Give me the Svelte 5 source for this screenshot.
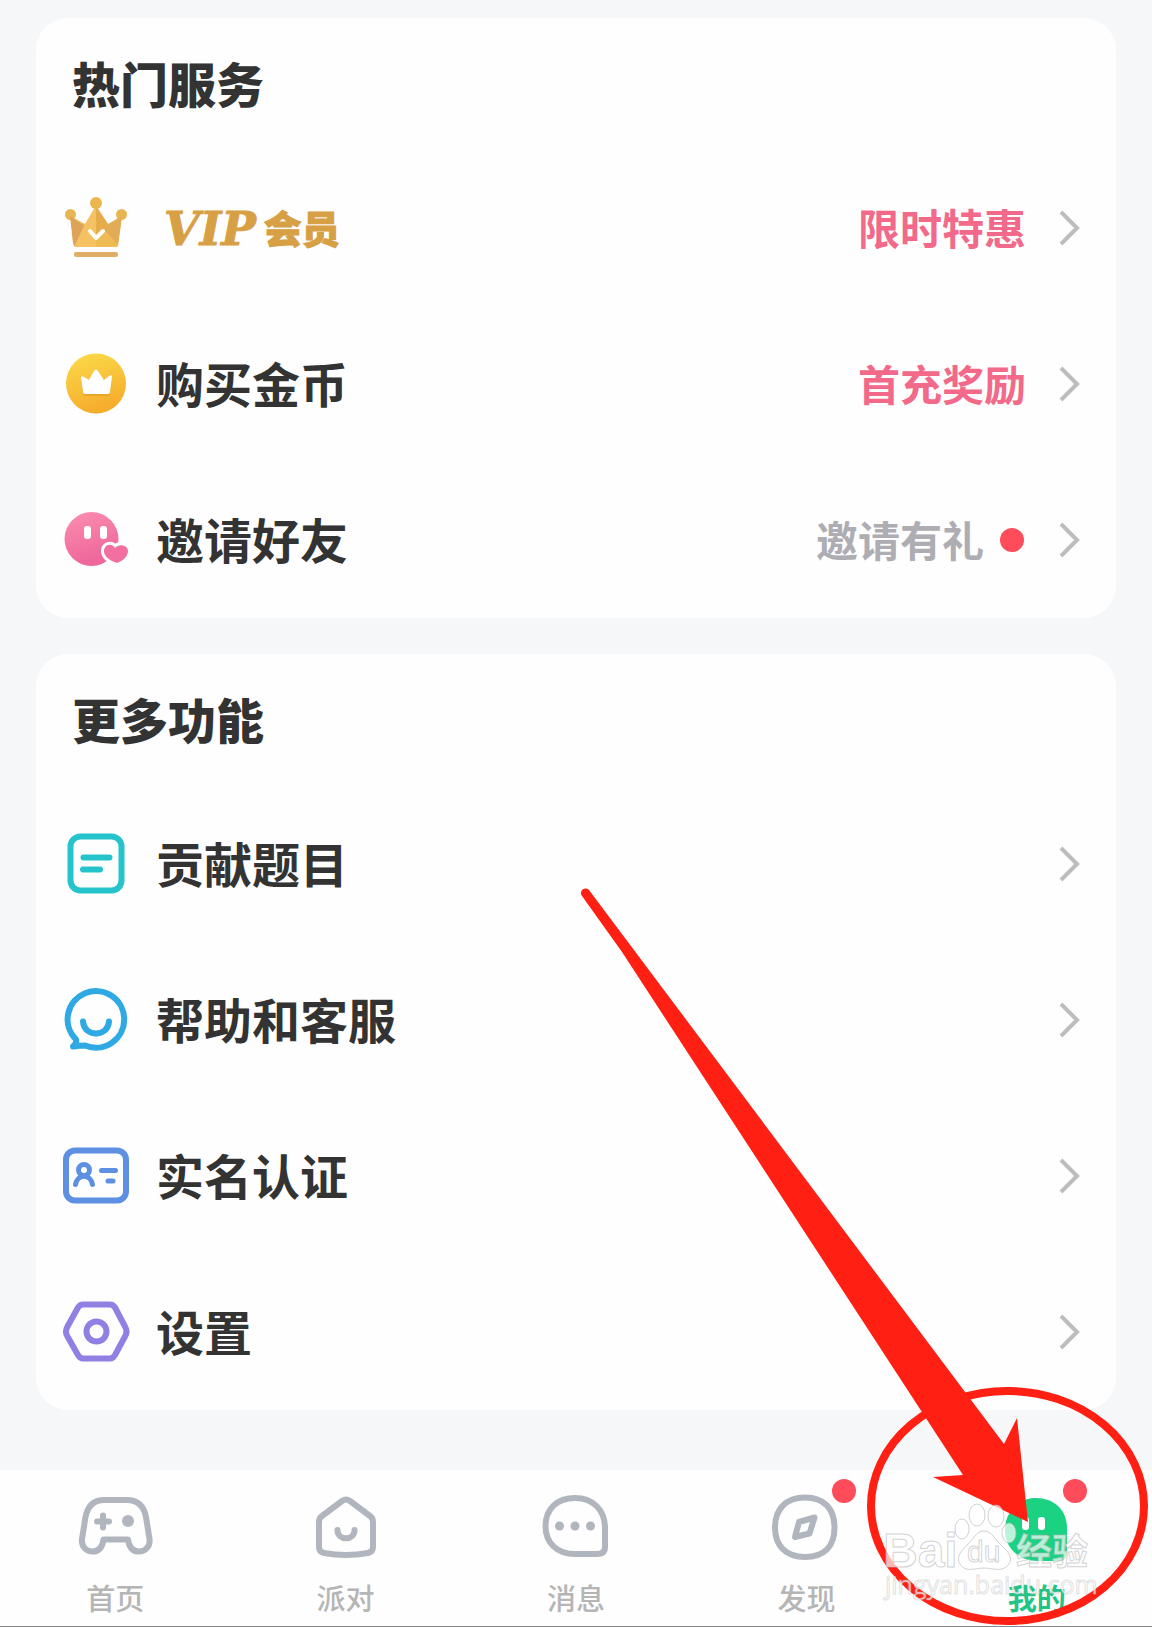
<script>
    const sections = [
        {
            title: '热门服务',
            items: [
                { icon: 'crown', vip: true, note: '限时特惠', hot: true },
                { icon: 'coin', label: '购买金币', note: '首充奖励', hot: true },
                { icon: 'invite', label: '邀请好友', note: '邀请有礼', dot: true }
            ]
        },
        {
            title: '更多功能',
            items: [
                { icon: 'doc', label: '贡献题目' },
                { icon: 'help', label: '帮助和客服' },
                { icon: 'idcard', label: '实名认证' },
                { icon: 'settings', label: '设置' }
            ]
        }
    ];

    const tabs = [
        { icon: 'game', label: '首页' },
        { icon: 'house', label: '派对' },
        { icon: 'message', label: '消息' },
        { icon: 'compass', label: '发现', badge: true },
        { icon: 'me', label: '我的', badge: true }
    ];

    let current = $state('me');
</script>

{#snippet rowIcon(name)}
    <svg class="row-icon" viewBox="0 0 72 72" aria-hidden="true">
        {#if name === 'crown'}
            <circle cx="10.500" cy="22.500" r="5.500" fill="#e9b552" />
            <circle cx="61.500" cy="22.500" r="5.500" fill="#e9b552" />
            <path d="M10 24l15 8 11-18 12 18 14-8-4 29q0 2-3 2H17q-2 0-3-2z" fill="#eebb55" />
            <path d="M10 24l20 14-15 17-2-4z" fill="#dda356" />
            <path d="M62 24L43 36l15 17z" fill="#e2ab55" />
            <path d="M36 14L24 34l-9 19q1 2 3 2h18z" fill="#f4c163" />
            <path d="M36 14l12 18-5 8-7 8z" fill="#e5ac4b" />
            <circle cx="36" cy="11" r="6" fill="#ebb64e" />
            <path d="M30 39l6 7 7-7" fill="none" stroke="#fff" stroke-width="4" stroke-linecap="round" stroke-linejoin="round" />
            <rect x="14" y="60" width="44" height="5" rx="2" fill="#dfad66" />
        {:else if name === 'coin'}
            <defs>
                <linearGradient id="gold" x1="0" y1="0" x2="0.3" y2="1">
                    <stop offset="0" stop-color="#fbdc4b" />
                    <stop offset="1" stop-color="#f6ad2c" />
                </linearGradient>
            </defs>
            <circle cx="36" cy="35.500" r="30" fill="url(#gold)" />
            <path d="M21 31l8 2 7-10 9 9 7-3-2 16q0 3-3 3H26q-3 0-3-3z" fill="#e29a22" opacity="0.6" />
            <path d="M21 30q0-3 3-1l5 3 5-9q2-3 4 0l6 9 5-4q3-2 3 1l-2 15q0 2-3 2H26q-3 0-3-2z" fill="#fff" />
        {:else if name === 'invite'}
            <defs>
                <linearGradient id="pink" x1="0" y1="0" x2="0.3" y2="1">
                    <stop offset="0" stop-color="#fb8eb0" />
                    <stop offset="1" stop-color="#ee669b" />
                </linearGradient>
            </defs>
            <circle cx="31.500" cy="35" r="27" fill="url(#pink)" />
            <rect x="24" y="22" width="7" height="13" rx="3" fill="#fff" />
            <rect x="40" y="22" width="7" height="13" rx="3" fill="#fff" />
            <path d="M57 59C50 57 43 52 44 46c1-6 8-7 11-2 4-5 13-3 13 3 0 5-5 10-11 12z" fill="#f26fa0" stroke="#fff" stroke-width="6" stroke-linejoin="round" />
            <path d="M57 59C50 57 43 52 44 46c1-6 8-7 11-2 4-5 13-3 13 3 0 5-5 10-11 12z" fill="#f26fa0" />
        {:else if name === 'doc'}
            <g fill="none" stroke="#25c3cb" stroke-width="6" stroke-linecap="round">
                <rect x="10.500" y="8.500" width="51" height="54" rx="10" />
                <path d="M23.500 29.500h26M23 41.500h17" />
            </g>
        {:else if name === 'help'}
            <g fill="none" stroke="#2fa9e4" stroke-width="6" stroke-linecap="round" stroke-linejoin="round">
                <path d="M13 62.500q4-3 3-7A28.300 28.300 0 1 1 25 61.500q-5 0-12 1z" />
                <path d="M23 37.500c1 16 25 16 26 0" />
            </g>
        {:else if name === 'idcard'}
            <g fill="none" stroke="#5d8fe3" stroke-linecap="round">
                <rect x="6" y="10.500" width="60" height="50" rx="9" stroke-width="6" />
                <circle cx="24" cy="30" r="5.500" stroke-width="5" />
                <path d="M15.500 44.500c2-11 15-11 17 0M41.500 30.500h14M48 41h5" stroke-width="5" />
            </g>
        {:else if name === 'settings'}
            <g fill="none" stroke="#917fe3" stroke-width="6" stroke-linejoin="round">
                <path d="M23 8.500h27q3 0 5 3l10 19q3 5 0 10L55 59q-2 3.500-5 3.500H23q-3 0-5-3.500L7.500 40.500q-3-5 0-10L18 11.500q2-3 5-3z" />
                <circle cx="36.500" cy="35.500" r="10" />
            </g>
        {/if}
    </svg>
{/snippet}

{#snippet tabIcon(name)}
    <svg class="tab-icon" viewBox="0 0 76 76" aria-hidden="true">
        {#if name === 'me'}
            <path d="M37 9C55 9 68 21 68 39v24q0 9-9 9H38C20 72 6 59 6 41S19 9 37 9z" fill="#1bd283" />
            <rect x="23" y="28" width="7" height="13" rx="3" fill="#fff" />
            <rect x="39" y="28" width="7" height="13" rx="3" fill="#fff" />
        {:else}
            <g fill="none" stroke="#b1b5bd" stroke-width="6" stroke-linecap="round" stroke-linejoin="round">
                {#if name === 'game'}
                    <path d="M27 11h23c12 0 17 7 19 17l3.500 22c1 7-4 12.500-10.500 12.500S52 58 51 50.500H26.500C25.500 58 22 62.500 15.500 62.500S4 57 5 50l3.500-22c2-10 7-17 18.500-17z" />
                    <path d="M20 32.500h12M26 26.500v12" />
                    <circle cx="51" cy="32" r="6" fill="#b1b5bd" stroke="none" />
                {:else if name === 'house'}
                    <path d="M34 12q4-3 8 0l20 15q3 2 3 6v25q0 5-5 6-22 4-44 0-5-1-5-6V33q0-4 3-6z" />
                    <path d="M29.500 41c0 11 17 11 17 0" />
                {:else if name === 'message'}
                    <path d="M37 9C55 9 67 21 67 39v19q0 7-8 7H37C19 65 7.500 54 7.500 37S19 9 37 9z" />
                    <g fill="#b1b5bd" stroke="none">
                        <circle cx="21.500" cy="37" r="4.500" />
                        <circle cx="37" cy="37" r="4.500" />
                        <circle cx="52.500" cy="37" r="4.500" />
                    </g>
                {:else if name === 'compass'}
                    <path d="M37 8.500c19 0 29.500 11 29.500 30S56 68 37 68 7 57 7 38.500s11-30 30-30z" />
                    <path d="M31 33l15.500-4.500-5 16L27 48z" />
                {/if}
            </g>
        {/if}
    </svg>
{/snippet}

<div class="page">
    <main>
        {#each sections as section}
            <section class="card">
                <h2>{section.title}</h2>
                {#each section.items as item}
                    <button class="row">
                        {@render rowIcon(item.icon)}
                        {#if item.vip}
                            <span class="vip"><em>VIP</em><b>会员</b></span>
                        {:else}
                            <span class="label">{item.label}</span>
                        {/if}
                        {#if item.note}
                            <span class="note" class:hot={item.hot}>{item.note}</span>
                        {/if}
                        {#if item.dot}
                            <i class="dot"></i>
                        {/if}
                        <svg class="chevron" viewBox="0 0 22 36" aria-hidden="true">
                            <path d="M3 2l16 16L3 34" fill="none" stroke="#bdbdbd" stroke-width="4" />
                        </svg>
                    </button>
                {/each}
            </section>
        {/each}
    </main>

    <nav>
        {#each tabs as tab}
            <button class="tab" class:active={current === tab.icon} onclick={() => current = tab.icon}>
                <span class="tab-picture">
                    {@render tabIcon(tab.icon)}
                    {#if tab.badge}
                        <i class="dot badge"></i>
                    {/if}
                </span>
                <span>{tab.label}</span>
            </button>
        {/each}
    </nav>

    <svg class="overlay" viewBox="0 0 1152 1627" aria-hidden="true">
        <ellipse cx="1007.500" cy="1506" rx="136.500" ry="115" fill="none" stroke="#ff2013" stroke-width="8" />
        <path d="M589 890L1004 1444 1017 1418 1028 1522 933 1477 963 1475 622 952 582 896A4.500 4.500 0 0 1 589 890z" fill="#ff2013" />
        <g class="mark">
            <text x="883" y="1567" font-size="48">Bai</text>
            <ellipse cx="962" cy="1529" rx="7" ry="10" />
            <ellipse cx="977" cy="1515" rx="8" ry="11" />
            <ellipse cx="996" cy="1516" rx="8" ry="11" />
            <ellipse cx="1009" cy="1533" rx="7" ry="10" />
            <path d="M984 1531c8 0 11 9 17 14 8 7 12 13 8 19-6 9-17 4-25 4s-19 5-24-4c-4-6 0-12 7-19 7-6 9-14 17-14z" />
            <text class="thin" x="967" y="1562" font-size="30">du</text>
            <text class="cn" x="1016" y="1565" font-size="36">经验</text>
            <text class="thin url" x="885" y="1594" font-size="25">jingyan.baidu.com</text>
        </g>
    </svg>
</div>

<style>
:global(body) {
    margin: 0;
    background: #f6f7f9;
}
.page {
    position: relative;
    font-family: "Noto Sans CJK SC", sans-serif;
    color: #333;
}
main {
    display: flex;
    flex-direction: column;
    gap: 36px;
    padding: 18px 36px 60px;
}
.card {
    padding: 0 24px;
    border-radius: 32px;
    background: #fefefe;
}
h2 {
    margin: 0;
    padding: 28px 12px 32px;
    font-size: 48px;
    font-weight: 900;
    line-height: 72px;
}
button {
    border: 0;
    background: none;
    color: inherit;
    font-family: inherit;
}
.row {
    display: flex;
    align-items: center;
    width: 100%;
    height: 156px;
    padding: 0 12px 0 0;
    text-align: left;
}
.row-icon {
    width: 72px;
    height: 72px;
    margin-right: 24px;
}
.label {
    padding-bottom: 4px;
    font-size: 48px;
    font-weight: 700;
    line-height: 72px;
}
.vip {
    display: flex;
    align-items: center;
    gap: 8px;
    padding: 0 0 4px 8px;
    color: #d7a044;
    -webkit-text-stroke: 1px #d7a044;
}
.vip em {
    padding-top: 6px;
    font: italic bold 46px/72px "DejaVu Serif", serif;
}
.vip b {
    font-size: 38px;
    font-weight: 900;
}
.note {
    margin-left: auto;
    padding-bottom: 2px;
    color: #adadb3;
    font-size: 42px;
    font-weight: 700;
    line-height: 60px;
}
.note.hot {
    color: #f2698a;
}
.dot {
    width: 24px;
    height: 24px;
    margin-left: 16px;
    border-radius: 50%;
    background: #ff4c5b;
}
.chevron {
    width: 22px;
    height: 36px;
    margin-left: auto;
}
.note + .chevron {
    margin-left: 32px;
}
.dot + .chevron {
    margin-left: 34px;
}

nav {
    display: flex;
    border-bottom: 1px solid #888;
    background: #fefefe;
}
.tab {
    flex: 1;
    display: flex;
    flex-direction: column;
    align-items: center;
    gap: 10px;
    padding: 19px 0 7px;
    color: #b5b5b5;
    font-size: 29px;
    font-weight: 500;
    line-height: 44px;
}
.tab.active {
    color: #22c486;
    font-weight: 700;
}
.tab-picture {
    position: relative;
    height: 76px;
}
.tab-icon {
    display: block;
    width: 76px;
    height: 76px;
}
.badge {
    position: absolute;
    top: -10px;
    right: -12px;
}

.overlay {
    position: absolute;
    top: 0;
    left: 0;
    width: 100%;
    pointer-events: none;
}
.mark {
    fill: rgba(255, 255, 255, 0.7);
    stroke: rgba(180, 180, 180, 0.6);
    font-family: "Liberation Sans", sans-serif;
    font-weight: 700;
}
.mark .cn {
    font-family: "Noto Sans CJK SC", sans-serif;
}
.mark .thin {
    font-weight: 400;
}
.mark .url {
    font-family: "Open Sans", sans-serif;
    stroke: rgba(180, 180, 180, 0.4);
}
</style>
